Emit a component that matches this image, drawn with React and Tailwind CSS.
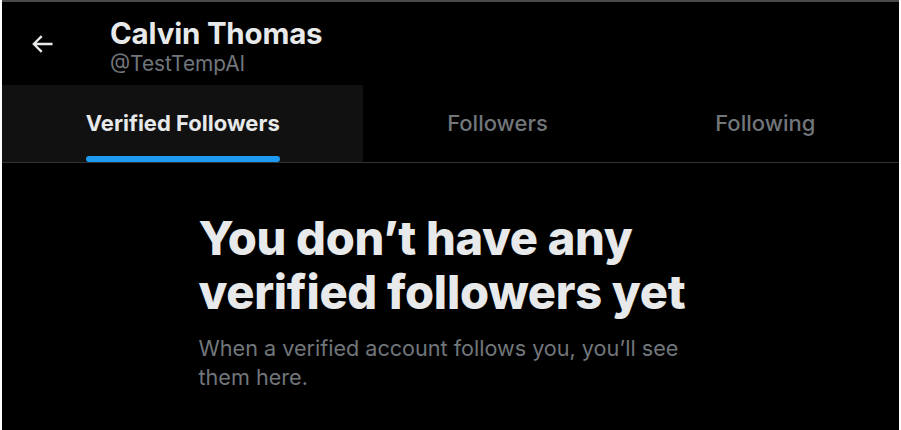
const TABS = ['Verified Followers', 'Followers', 'Following'];

function BackArrow() {
  return (
    <svg viewBox="0 0 24 24" className="w-[28px] h-[28px] fill-[#e7e9ea]">
      <path d="M7.414 13l5.043 5.04-1.414 1.42L3.586 12l7.457-7.46 1.414 1.42L7.414 11H21v2H7.414z" />
    </svg>
  );
}

export default function App() {
  const active = 0;

  return (
    <div className="w-[901px] h-[430px] bg-white px-[2px] overflow-hidden" style={{ fontFamily: 'Inter, "Noto Sans", sans-serif' }}>
      <div className="h-full bg-black flex flex-col">
        <div className="h-[2px] bg-[#4a4a4a] shrink-0" />

        {/* Header */}
        <div className="h-[83px] flex items-center shrink-0">
          <div className="w-[108px] pl-[26px] flex items-center">
            <BackArrow />
          </div>
          <div className="flex flex-col mt-[5px]">
            <span className="text-[#e7e9ea] text-[29.5px] leading-[36px] font-bold tracking-[-0.2px]">Calvin Thomas</span>
            <span className="text-[#71767b] text-[20.8px] leading-[26px]">@TestTempAI</span>
          </div>
        </div>

        {/* Tabs */}
        <div className="flex h-[78px] border-b border-[#2f3336] shrink-0">
          {TABS.map((tab, i) => (
            <div
              key={tab}
              className={`flex-auto flex justify-center ${i === active ? 'bg-[#111111]' : ''}`}
            >
              <div className="relative flex items-center h-full">
                <span className={`text-[22px] ${i === active ? 'font-bold text-[#e7e9ea]' : 'font-medium text-[#71767b]'}`}>
                  {tab}
                </span>
                {i === active && (
                  <div className="absolute left-0 right-0 bottom-0 h-[6px] rounded-full bg-[#1d9bf0]" />
                )}
              </div>
            </div>
          ))}
        </div>

        {/* Empty state */}
        <div className="w-[600px] mx-auto px-[48px] pt-[48px]">
          <h2 className="text-[#e7e9ea] text-[47px] leading-[54px] font-extrabold tracking-[-0.3px]">
            You don’t have any verified followers yet
          </h2>
          <p className="text-[#71767b] text-[21.6px] leading-[29px] mt-[15px]">
            When a verified account follows you, you’ll see them here.
          </p>
        </div>
      </div>
    </div>
  );
}
